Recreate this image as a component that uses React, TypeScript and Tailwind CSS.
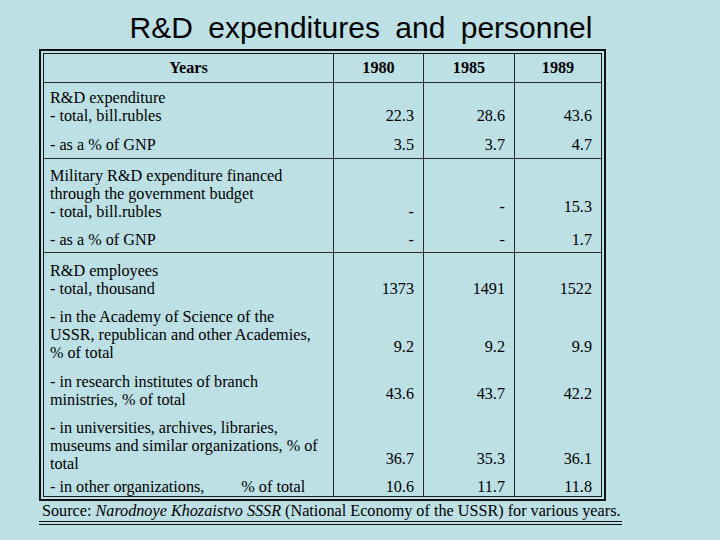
const serif = { fontFamily: "'Liberation Serif', 'Times New Roman', serif" };

type SubRow = {
  lines: React.ReactNode[];
  pad: string; // label cell padding
  vals: string[];
  vpad: string[]; // value cell padding (bottom alignment)
  first?: boolean;
};

const rows: SubRow[] = [
  {
    lines: ["R&D expenditure", "- total, bill.rubles"],
    pad: "pt-[6px]",
    vals: ["22.3", "28.6", "43.6"],
    vpad: ["pb-0", "pb-0", "pb-0"],
    first: true,
  },
  {
    lines: ["- as a % of GNP"],
    pad: "pt-[11px] pb-[4px]",
    vals: ["3.5", "3.7", "4.7"],
    vpad: ["pb-[4px]", "pb-[4px]", "pb-[4px]"],
  },
  {
    lines: [
      "Military R&D expenditure financed",
      "through the government budget",
      "- total, bill.rubles",
    ],
    pad: "pt-[8px]",
    vals: ["-", "-", "15.3"],
    vpad: ["pb-0", "pb-[5px]", "pb-[5px]"],
    first: true,
  },
  {
    lines: ["- as a % of GNP"],
    pad: "pt-[10px] pb-[3px]",
    vals: ["-", "-", "1.7"],
    vpad: ["pb-[3px]", "pb-[3px]", "pb-[3px]"],
  },
  {
    lines: ["R&D employees", "- total, thousand"],
    pad: "pt-[9px]",
    vals: ["1373", "1491", "1522"],
    vpad: ["pb-0", "pb-0", "pb-0"],
    first: true,
  },
  {
    lines: [
      "- in the Academy of Science of the",
      "USSR, republican and other Academies,",
      "% of total",
    ],
    pad: "pt-[10px]",
    vals: ["9.2", "9.2", "9.9"],
    vpad: ["pb-[6px]", "pb-[6px]", "pb-[6px]"],
  },
  {
    lines: ["- in research institutes of branch", "ministries, % of total"],
    pad: "pt-[11px]",
    vals: ["43.6", "43.7", "42.2"],
    vpad: ["pb-[6px]", "pb-[6px]", "pb-[6px]"],
  },
  {
    lines: [
      "- in universities, archives, libraries,",
      "museums and similar organizations, % of",
      "total",
    ],
    pad: "pt-[10px]",
    vals: ["36.7", "35.3", "36.1"],
    vpad: ["pb-[5px]", "pb-[5px]", "pb-[5px]"],
  },
  {
    lines: [
      <>
        - in other organizations,<span className="ml-[37px]">% of total</span>
      </>,
    ],
    pad: "pt-[5px]",
    vals: ["10.6", "11.7", "11.8"],
    vpad: ["pb-0", "pb-0", "pb-0"],
  },
];

export default function App() {
  return (
    <div className="w-[720px] h-[540px] bg-[#bde0e4] text-black overflow-hidden">
      {/* Title */}
      <h1
        className="pt-[11px] pl-[2px] text-center text-[30px] leading-[34px] [word-spacing:7px]"
        style={{ fontFamily: "'Liberation Sans', Arial, sans-serif" }}
      >
        R&amp;D expenditures and personnel
      </h1>

      <div className="ml-[39px] mt-[4px] w-[584px]" style={serif}>
        {/* double framed table */}
        <div className="w-[567px] border-2 border-[#111] p-[2px]">
          <div className="grid grid-cols-[289px_90px_91px_87px] border border-[#1a1a1a] text-[16.2px] leading-[18px]">
            {/* header */}
            <div className="h-[29px] flex items-center justify-center font-bold border-b border-[#2a2a2a]">
              Years
            </div>
            {["1980", "1985", "1989"].map((y) => (
              <div
                key={y}
                className="h-[29px] flex items-center justify-center font-bold border-b border-l border-[#2a2a2a]"
              >
                {y}
              </div>
            ))}

            {rows.map((r, i) => (
              <div key={i} className="contents">
                <div
                  className={`pl-[6px] whitespace-nowrap ${r.pad} ${
                    r.first && i > 0 ? "border-t border-[#2a2a2a]" : ""
                  }`}
                >
                  {r.lines.map((l, j) => (
                    <div key={j}>{l}</div>
                  ))}
                </div>
                {r.vals.map((v, k) => (
                  <div
                    key={k}
                    className={`flex items-end justify-end pr-[9px] border-l border-[#2a2a2a] ${r.vpad[k]} ${
                      r.first && i > 0 ? "border-t" : ""
                    }`}
                  >
                    {v}
                  </div>
                ))}
              </div>
            ))}
          </div>
        </div>

        {/* source */}
        <p className="mt-[1px] pl-[3px] text-[16.2px] leading-[18px] whitespace-nowrap">
          Source: <i>Narodnoye Khozaistvo SSSR</i> (National Economy of the USSR) for various years.
        </p>
        <div className="mt-[1px] w-[583px] h-[4px] border-t border-b border-[#111]" />
      </div>
    </div>
  );
}
